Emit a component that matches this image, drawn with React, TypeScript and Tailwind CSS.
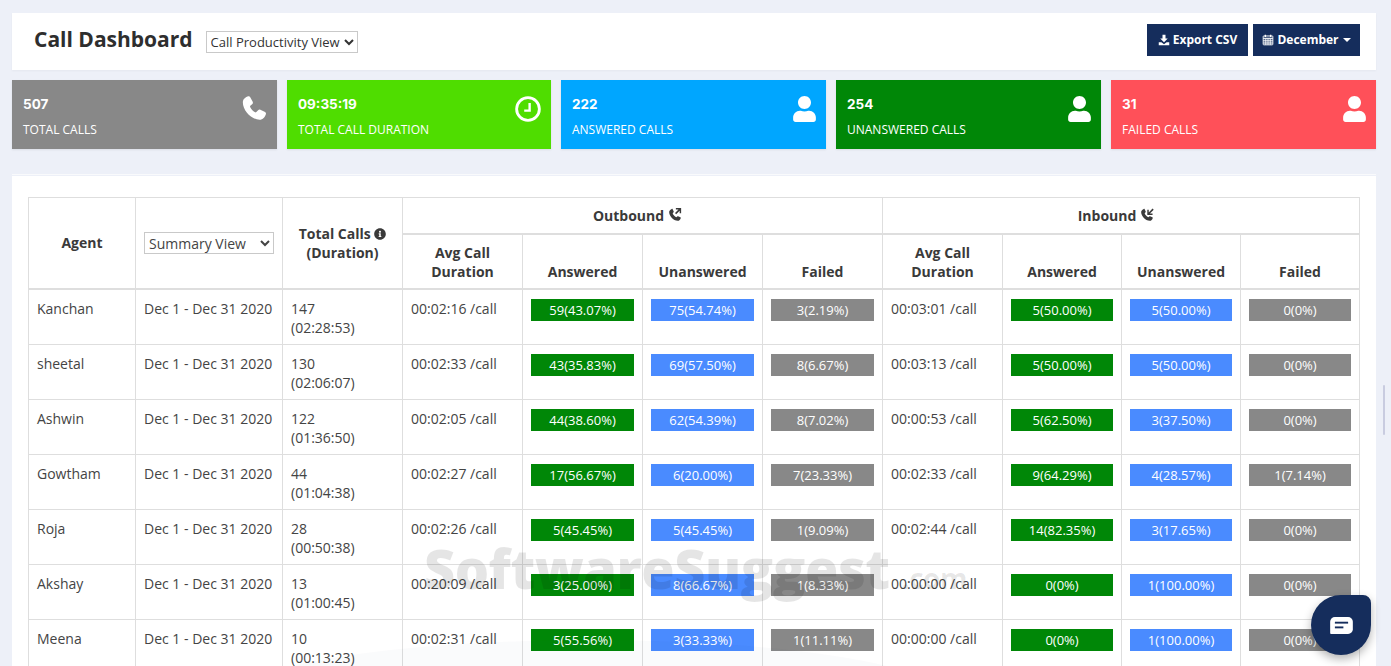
import { FaUser, FaInfoCircle } from 'react-icons/fa'

const font = 'font-["Open_Sans","Liberation_Sans",sans-serif]'

function PhoneIcon({ className }: { className?: string }) {
  return (
    <svg viewBox="0 0 24 24" fill="currentColor" className={className}>
      <path d="M7.2 1.2c.7-.3 1.5 0 1.9.7l2.2 4.2c.3.7.2 1.4-.3 1.9L9.2 9.6c-.3.3-.3.7-.2 1.1.9 2 2.4 3.700 4.400 4.700.4.2.8.1 1.100-.2l1.600-1.700c.5-.5 1.300-.7 2-.4l4.200 2.100c.7.4 1 1.200.7 1.900-.8 2.300-2.600 4.900-5.600 4.900C9.600 21.900 1.700 12.600 2.600 5.500 2.900 3.500 5 2 7.200 1.200z" />
    </svg>
  )
}

function ClockIcon({ className }: { className?: string }) {
  return (
    <svg viewBox="0 0 24 24" fill="none" stroke="currentColor" className={className}>
      <circle cx="12" cy="12" r="10.500" strokeWidth="2.600" />
      <path d="M13.500 6.500v7H8.500" strokeWidth="2.200" />
    </svg>
  )
}

function ExportIcon({ className }: { className?: string }) {
  return (
    <svg viewBox="0 0 16 16" fill="currentColor" className={className}>
      <path d="M6 1h4v5h3l-5 5-5-5h3z" />
      <path d="M1 11h3.500L8 13.500 11.500 11H15v4H1z" />
    </svg>
  )
}

function CalendarIcon({ className }: { className?: string }) {
  return (
    <svg viewBox="0 0 16 16" fill="#ffffff" fillOpacity="0.25" stroke="currentColor" strokeWidth="1.100" className={className}>
      <rect x="1.500" y="2.500" width="13" height="12" rx="1" />
      <path d="M1.500 6h13M1.500 9h13M1.500 12h13M5 6v8.500M8 6v8.500M11 6v8.500" />
      <path d="M4.500 1v3M11.500 1v3" strokeWidth="1.800" />
    </svg>
  )
}

function CallDirection({ inbound }: { inbound?: boolean }) {
  return (
    <svg viewBox="0 0 24 24" className="ml-[4px] inline-block h-[14px] w-[14px] align-[-1px]" fill="currentColor">
      <path d="M6.500 1.500c.6-.2 1.200 0 1.500.6l1.800 3.800c.2.500.1 1.100-.3 1.500L8 9c.9 2.900 3.200 5.500 6.300 6.900l1.500-1.500c.4-.4 1-.5 1.500-.3l3.900 1.800c.6.3.8.900.6 1.500-.7 2.300-2.500 4.600-5 4.600C9 22 1.500 13 2 6.500c.2-2.200 2.200-4.200 4.500-5z" />
      {inbound ? (
        <path d="M21.500 1 15 7.500V3h-2.500v9h9V9.500H17L23.500 3z" />
      ) : (
        <path d="M14 10.500 20 4.500v4.500h2.500V0h-9v2.500H18L12 8.500z" />
      )}
    </svg>
  )
}

function Caret() {
  return <span className="ml-1 inline-block border-x-[4px] border-t-[4px] border-x-transparent border-t-white align-[2px]" />
}

type Kpi = { value: string; label: string; bg: string; icon: 'phone' | 'clock' | 'user' }

const kpis: Kpi[] = [
  { value: '507', label: 'TOTAL CALLS', bg: 'bg-[#888888]', icon: 'phone' },
  { value: '09:35:19', label: 'TOTAL CALL DURATION', bg: 'bg-[#4fdd00]', icon: 'clock' },
  { value: '222', label: 'ANSWERED CALLS', bg: 'bg-[#00a6ff]', icon: 'user' },
  { value: '254', label: 'UNANSWERED CALLS', bg: 'bg-[#008707]', icon: 'user' },
  { value: '31', label: 'FAILED CALLS', bg: 'bg-[#ff5059]', icon: 'user' },
]

type Row = {
  agent: string
  total: string
  duration: string
  outAvg: string
  out: [string, string, string]
  inAvg: string
  inb: [string, string, string]
}

const rows: Row[] = [
  { agent: 'Kanchan', total: '147', duration: '(02:28:53)', outAvg: '00:02:16 /call', out: ['59(43.07%)', '75(54.74%)', '3(2.19%)'], inAvg: '00:03:01 /call', inb: ['5(50.00%)', '5(50.00%)', '0(0%)'] },
  { agent: 'sheetal', total: '130', duration: '(02:06:07)', outAvg: '00:02:33 /call', out: ['43(35.83%)', '69(57.50%)', '8(6.67%)'], inAvg: '00:03:13 /call', inb: ['5(50.00%)', '5(50.00%)', '0(0%)'] },
  { agent: 'Ashwin', total: '122', duration: '(01:36:50)', outAvg: '00:02:05 /call', out: ['44(38.60%)', '62(54.39%)', '8(7.02%)'], inAvg: '00:00:53 /call', inb: ['5(62.50%)', '3(37.50%)', '0(0%)'] },
  { agent: 'Gowtham', total: '44', duration: '(01:04:38)', outAvg: '00:02:27 /call', out: ['17(56.67%)', '6(20.00%)', '7(23.33%)'], inAvg: '00:02:33 /call', inb: ['9(64.29%)', '4(28.57%)', '1(7.14%)'] },
  { agent: 'Roja', total: '28', duration: '(00:50:38)', outAvg: '00:02:26 /call', out: ['5(45.45%)', '5(45.45%)', '1(9.09%)'], inAvg: '00:02:44 /call', inb: ['14(82.35%)', '3(17.65%)', '0(0%)'] },
  { agent: 'Akshay', total: '13', duration: '(01:00:45)', outAvg: '00:20:09 /call', out: ['3(25.00%)', '8(66.67%)', '1(8.33%)'], inAvg: '00:00:00 /call', inb: ['0(0%)', '1(100.00%)', '0(0%)'] },
  { agent: 'Meena', total: '10', duration: '(00:13:23)', outAvg: '00:02:31 /call', out: ['5(55.56%)', '3(33.33%)', '1(11.11%)'], inAvg: '00:00:00 /call', inb: ['0(0%)', '1(100.00%)', '0(0%)'] },
]

const td = 'border border-[#dedede] px-2 pt-[9px] align-top'
const th = 'border border-[#dedede] text-center font-bold text-[#3a3a3a] text-[14px] leading-[19px]'
const barColors = ['bg-[#008707]', 'bg-[#4a8bff]', 'bg-[#888888]']

function Bars({ values }: { values: [string, string, string] }) {
  return (
    <>
      {values.map((v, i) => (
        <td key={i} className={td}>
          <div className={`h-[22px] text-center text-[13px] leading-[22px] text-white ${barColors[i]}`}>{v}</div>
        </td>
      ))}
    </>
  )
}

export default function App() {
  return (
    <div className={`relative h-[666px] overflow-hidden bg-[#edf0f8] ${font}`}>
      <div className="pl-3 pr-[15px] pt-[13px]">
        <div className="flex h-[57px] items-center justify-between bg-white pl-[22px] pr-4 shadow-[0_1px_2px_rgba(0,0,0,0.04)]">
          <div className="flex items-center">
            <h1 className="mb-[4px] text-[21px] font-bold text-[#2e2e2e]">Call Dashboard</h1>
            <select className="ml-[13px] mt-[1px] h-[22px] w-[152px] border border-[#c9c9c9] bg-white text-[13px] text-[#333]">
              <option>Call Productivity View</option>
            </select>
          </div>
          <div className="flex gap-[5px] pb-[4px]">
            <button className="flex h-8 w-[101px] items-center justify-center bg-[#152d5c] text-[12px] font-bold text-white">
              <ExportIcon className="mr-[3px] h-3 w-3" />
              Export CSV
            </button>
            <button className="flex h-8 w-[107px] items-center justify-center bg-[#152d5c] text-[12px] font-bold text-white">
              <CalendarIcon className="mr-[3px] h-3 w-3" />
              December
              <Caret />
            </button>
          </div>
        </div>

        <div className="mt-[10px] grid grid-cols-[265px_264px_265px_265px_265px] gap-[10px]">
          {kpis.map((k) => (
            <div key={k.label} className={`flex h-[69px] justify-between pl-[11px] pr-[10px] text-white shadow-[0_1px_2px_rgba(0,0,0,0.08)] ${k.bg}`}>
              <div>
                <div className={'mt-[14px] font-["Inter",sans-serif] text-[13.5px] font-bold leading-5'}>{k.value}</div>
                <div className="mt-[6px] text-[12px] leading-5">{k.label}</div>
              </div>
              {k.icon === 'phone' && <PhoneIcon className="mt-[15px] h-[27px] w-[27px]" />}
              {k.icon === 'clock' && <ClockIcon className="mt-[16px] h-[26px] w-[26px]" />}
              {k.icon === 'user' && <FaUser className="mt-[16px] h-[26px] w-[23px]" />}
            </div>
          ))}
        </div>

        <div className="mt-[25px] h-px bg-[#f9fafc]" />
        <div className="mt-px bg-white px-4 pt-[21px]">
          <table className="w-[1331px] table-fixed border-collapse text-[14px] leading-[19px] text-[#444]">
            <colgroup>
              <col className="w-[107px]" />
              <col className="w-[147px]" />
              <col className="w-[120px]" />
              <col className="w-[120px]" />
              <col className="w-[120px]" />
              <col className="w-[120px]" />
              <col className="w-[120px]" />
              <col className="w-[120px]" />
              <col className="w-[119px]" />
              <col className="w-[119px]" />
              <col className="w-[119px]" />
            </colgroup>
            <thead>
              <tr className="h-[36px] border-b-2 border-[#dedede]">
                <th rowSpan={2} className={th}>Agent</th>
                <th rowSpan={2} className={`${th} px-2`}>
                  <select className="h-[22px] w-full border border-[#c9c9c9] bg-white text-[14px] font-normal text-[#444]">
                    <option>Summary View</option>
                  </select>
                </th>
                <th rowSpan={2} className={th}>
                  Total Calls <FaInfoCircle className="inline-block h-[12px] w-[12px] align-[-1px]" />
                  <br />
                  (Duration)
                </th>
                <th colSpan={4} className={`${th} pr-[10px]`}>Outbound<CallDirection /></th>
                <th colSpan={4} className={`${th} pr-[10px]`}>Inbound<CallDirection inbound /></th>
              </tr>
              <tr className="h-[55px] border-b-2 border-[#dedede]">
                <th className={`${th} align-bottom pb-[7px]`}>Avg Call<br />Duration</th>
                <th className={`${th} align-bottom pb-[7px]`}>Answered</th>
                <th className={`${th} align-bottom pb-[7px]`}>Unanswered</th>
                <th className={`${th} align-bottom pb-[7px]`}>Failed</th>
                <th className={`${th} align-bottom pb-[7px]`}>Avg Call<br />Duration</th>
                <th className={`${th} align-bottom pb-[7px]`}>Answered</th>
                <th className={`${th} align-bottom pb-[7px]`}>Unanswered</th>
                <th className={`${th} align-bottom pb-[7px]`}>Failed</th>
              </tr>
            </thead>
            <tbody>
              {rows.map((r, i) => (
                <tr key={r.agent} className={i === 0 ? 'h-[56px]' : 'h-[55px]'}>
                  <td className={td}>{r.agent}</td>
                  <td className={`${td} whitespace-nowrap`}>Dec 1 - Dec 31 2020</td>
                  <td className={td}>{r.total}<br />{r.duration}</td>
                  <td className={td}>{r.outAvg}</td>
                  <Bars values={r.out} />
                  <td className={td}>{r.inAvg}</td>
                  <Bars values={r.inb} />
                </tr>
              ))}
            </tbody>
          </table>
        </div>
      </div>

      {/* watermark */}
      <div className={'pointer-events-none absolute left-[424px] top-[536px] whitespace-nowrap text-[54px] font-extrabold leading-[64px] tracking-[-0.5px] text-black/10'}>
        SoftwareSuggest
        <span className="ml-[12px] text-[28px] font-bold">.com</span>
      </div>

      {/* faint swoosh at the bottom of the watermark */}
      <div className="pointer-events-none absolute left-[230px] top-[640px] h-[120px] w-[720px] rounded-[50%] bg-[#0a4a6a]/[0.02]" />

      {/* chat button */}
      <div className="absolute left-[1311px] top-[595px] flex h-[60px] w-[60px] items-center justify-center rounded-[30px] rounded-tr-[8px] bg-[#152d5c] shadow-[0_4px_10px_rgba(0,0,0,0.3)]">
        <svg viewBox="0 0 24 18" className="h-[17px] w-[23px]">
          <path d="M5 0h14a5 5 0 0 1 5 5v8a5 5 0 0 1-5 5H1a1 1 0 0 1-1-1V5a5 5 0 0 1 5-5z" fill="#fff" />
          <path d="M5 6h14" stroke="#152d5c" strokeWidth="2" />
          <path d="M5 11h9" stroke="#152d5c" strokeWidth="2" />
        </svg>
      </div>

      {/* faint scroll handle on the right */}
      <div className="absolute left-[1383px] top-[385px] h-[50px] w-[2px] rounded-sm bg-[#c9cce0]" />
    </div>
  )
}
